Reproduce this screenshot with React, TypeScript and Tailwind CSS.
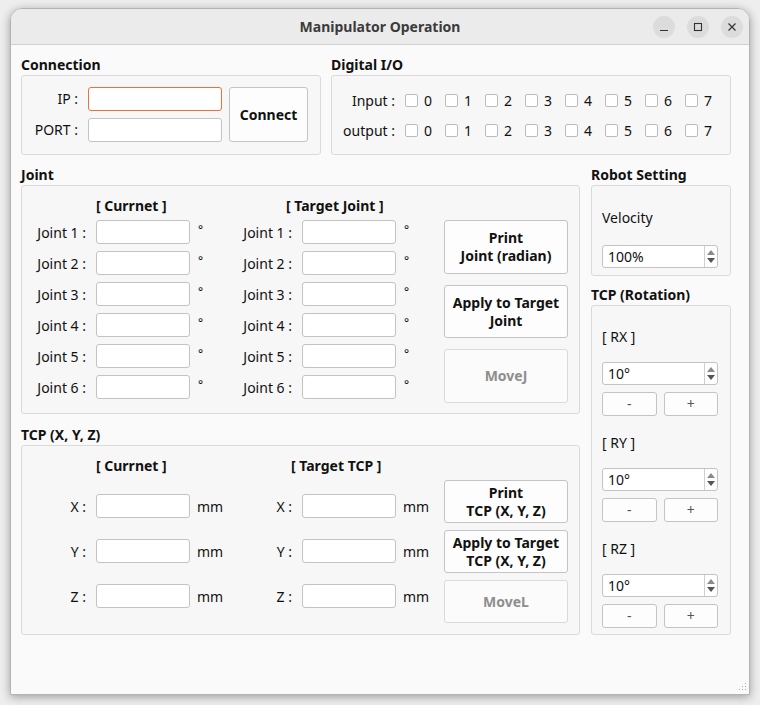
import React from "react";

const font = "font-['Noto_Sans',sans-serif]";

function GroupLabel({ children }: { children: React.ReactNode }) {
  return (
    <div className="h-[20px] whitespace-nowrap text-[14px] font-bold leading-[20px] text-[#111]">
      {children}
    </div>
  );
}

function Field({ width = "w-[94px]", focused = false }: { width?: string; focused?: boolean }) {
  return (
    <input
      className={`h-[24px] ${width} rounded-[3px] border bg-white outline-none ${
        focused ? "border-[#ec6e43]" : "border-[#c3c3c3]"
      }`}
    />
  );
}

function Btn({
  children,
  className = "",
  disabled = false,
}: {
  children: React.ReactNode;
  className?: string;
  disabled?: boolean;
}) {
  return (
    <button
      type="button"
      className={`flex items-center justify-center rounded-[3px] border text-center text-[14px] font-bold leading-[18px] ${
        disabled
          ? "border-[#dadada] bg-[#fbfbfb] text-[#8e8e8e]"
          : "border-[#c4c4c4] bg-[#fdfdfd] text-[#111]"
      } ${className}`}
    >
      {children}
    </button>
  );
}

function SpinBox({ value }: { value: string }) {
  return (
    <div className="flex h-[23px] w-[116px] items-stretch rounded-[3px] border border-[#c3c3c3] bg-white">
      <div className="flex flex-1 items-center pl-[5px] text-[14px] text-[#111]">{value}</div>
      <div className="flex w-[13px] flex-col items-center justify-center gap-[3px] border-l border-[#d0d0d0]">
        <svg width="8" height="5" viewBox="0 0 8 5">
          <path d="M0 5 L4 0 L8 5 Z" fill="#8a8a8a" />
        </svg>
        <svg width="8" height="5" viewBox="0 0 8 5">
          <path d="M0 0 L8 0 L4 5 Z" fill="#555" />
        </svg>
      </div>
    </div>
  );
}

function JointColumn({ header, headerPad }: { header: string; headerPad: string }) {
  const rows = [1, 2, 3, 4, 5, 6];
  return (
    <div className="w-[206px] shrink-0">
      <div className={`h-[20px] text-[14px] font-bold leading-[20px] ${headerPad}`}>{header}</div>
      <div className="mt-[4px] flex flex-col gap-[7px]">
        {rows.map((n) => (
          <div key={n} className="flex h-[24px] items-center">
            <span className="w-[53px] whitespace-nowrap text-right">Joint {n} :</span>
            <span className="ml-[10px]">
              <Field />
            </span>
            <span className="ml-[8px] -mt-[4px] text-[12px]">°</span>
          </div>
        ))}
      </div>
    </div>
  );
}

function TcpColumn({ header, headerPad }: { header: string; headerPad: string }) {
  return (
    <div className="w-[206px] shrink-0">
      <div className={`h-[20px] text-[14px] font-bold leading-[20px] ${headerPad}`}>{header}</div>
      <div className="mt-[18px] flex flex-col gap-[21px]">
        {["X", "Y", "Z"].map((a) => (
          <div key={a} className="flex h-[24px] items-center">
            <span className="w-[53px] whitespace-nowrap text-right">{a} :</span>
            <span className="ml-[10px]">
              <Field />
            </span>
            <span className="ml-[7px]">mm</span>
          </div>
        ))}
      </div>
    </div>
  );
}

function RotSection({ name }: { name: string }) {
  return (
    <div>
      <div className="h-[20px] leading-[20px]">[ {name} ]</div>
      <div className="mt-[15px]">
        <SpinBox value="10°" />
      </div>
      <div className="mt-[7px] flex w-[116px] gap-[7px]">
        <Btn className="h-[24px] flex-1 !font-normal text-[#555]">-</Btn>
        <Btn className="h-[24px] flex-1 !font-normal text-[#555]">+</Btn>
      </div>
    </div>
  );
}

export default function App() {
  const digits = [0, 1, 2, 3, 4, 5, 6, 7];
  return (
    <div className={`h-[705px] w-[760px] overflow-hidden bg-[#eeeeee] pt-[8px] ${font}`}>
      <div className="mx-[10px] flex h-[687px] w-[740px] flex-col overflow-hidden rounded-t-[12px] border border-[#b4b4b4] shadow-[0_2px_10px_rgba(0,0,0,0.35)]">
        {/* title bar */}
        <div className="flex h-[36px] shrink-0 items-center border-b border-[#cfcfcf] bg-[#ebebeb]">
          <div className="w-[110px]" />
          <div className="flex-1 text-center text-[14px] font-bold text-[#3b3b3b]">
            Manipulator Operation
          </div>
          <div className="flex w-[110px] justify-end gap-[12px] pr-[6px]">
            <div className="flex h-[22px] w-[22px] items-center justify-center rounded-full bg-[#dcdcdc]">
              <svg width="10" height="10" viewBox="0 0 10 10">
                <path d="M1 8.5 H9" stroke="#333" strokeWidth="1.2" />
              </svg>
            </div>
            <div className="flex h-[22px] w-[22px] items-center justify-center rounded-full bg-[#dcdcdc]">
              <svg width="10" height="10" viewBox="0 0 10 10">
                <rect x="1.5" y="1.5" width="7" height="7" fill="none" stroke="#333" strokeWidth="1.1" />
              </svg>
            </div>
            <div className="flex h-[22px] w-[22px] items-center justify-center rounded-full bg-[#dcdcdc]">
              <svg width="10" height="10" viewBox="0 0 10 10">
                <path d="M1.5 1.5 L8.5 8.5 M8.5 1.5 L1.5 8.5" stroke="#333" strokeWidth="1.2" />
              </svg>
            </div>
          </div>
        </div>

        {/* content */}
        <div className="relative flex-1 bg-[#fafafa] pl-[10px] pr-[18px] pt-[10px] text-[14px] text-[#111]">
          {/* top row */}
          <div className="flex gap-[10px]">
            <div className="w-[300px] shrink-0">
              <GroupLabel>Connection</GroupLabel>
              <div className="flex h-[80px] rounded-[3px] border border-[#dadada] bg-[#f7f7f7] pt-[11px]">
                <div className="flex w-[56px] flex-col gap-[7px]">
                  <div className="h-[24px] text-right leading-[24px]">IP :</div>
                  <div className="h-[24px] whitespace-nowrap text-right leading-[24px]">PORT :</div>
                </div>
                <div className="ml-[10px] flex flex-col gap-[7px]">
                  <Field width="w-[134px]" focused />
                  <Field width="w-[134px]" />
                </div>
                <Btn className="ml-[7px] h-[55px] w-[79px]">Connect</Btn>
              </div>
            </div>
            <div className="flex-1">
              <GroupLabel>Digital I/O</GroupLabel>
              <div className="h-[80px] rounded-[3px] border border-[#dadada] bg-[#f7f7f7] pt-[9px]">
                {["Input :", "output :"].map((lbl) => (
                  <div key={lbl} className="flex h-[30px] items-center">
                    <span className="w-[63px] whitespace-nowrap text-right">{lbl}</span>
                    <div className="ml-[10px] flex">
                      {digits.map((d) => (
                        <div key={d} className="flex w-[40px] items-center">
                          <span className="h-[13px] w-[13px] rounded-[2px] border border-[#bcbcbc] bg-white" />
                          <span className="ml-[6px]">{d}</span>
                        </div>
                      ))}
                    </div>
                  </div>
                ))}
              </div>
            </div>
          </div>

          {/* middle + bottom */}
          <div className="mt-[10px] flex gap-[11px]">
            <div className="w-[559px] shrink-0">
              <GroupLabel>Joint</GroupLabel>
              <div className="flex h-[229px] rounded-[3px] border border-[#dadada] bg-[#f7f7f7] pl-[11px] pt-[10px]">
                <JointColumn header="[ Currnet ]" headerPad="pl-[63px]" />
                <div className="w-[205px] shrink-0">
                  <JointColumn header="[ Target Joint ]" headerPad="pl-[47px]" />
                </div>
                <div className="flex flex-col gap-[11px] pt-[24px]">
                  <Btn className="h-[54px] w-[124px]">
                    Print
                    <br />
                    Joint (radian)
                  </Btn>
                  <Btn className="h-[53px] w-[124px]">
                    Apply to Target
                    <br />
                    Joint
                  </Btn>
                  <Btn className="h-[54px] w-[124px]" disabled>
                    MoveJ
                  </Btn>
                </div>
              </div>

              <div className="mt-[11px]">
                <GroupLabel>TCP (X, Y, Z)</GroupLabel>
                <div className="flex h-[190px] rounded-[3px] border border-[#dadada] bg-[#f7f7f7] pl-[11px] pt-[10px]">
                  <TcpColumn header="[ Currnet ]" headerPad="pl-[63px]" />
                  <div className="w-[205px] shrink-0">
                    <TcpColumn header="[ Target TCP ]" headerPad="pl-[52px]" />
                  </div>
                  <div className="flex flex-col gap-[7px] pt-[24px]">
                    <Btn className="h-[43px] w-[124px]">
                      Print
                      <br />
                      TCP (X, Y, Z)
                    </Btn>
                    <Btn className="h-[43px] w-[124px]">
                      Apply to Target
                      <br />
                      TCP (X, Y, Z)
                    </Btn>
                    <Btn className="h-[43px] w-[124px]" disabled>
                      MoveL
                    </Btn>
                  </div>
                </div>
              </div>
            </div>

            <div className="flex-1">
              <GroupLabel>Robot Setting</GroupLabel>
              <div className="h-[91px] rounded-[3px] border border-[#dadada] bg-[#f7f7f7] pl-[10px] pt-[22px]">
                <div className="h-[20px] leading-[20px]">Velocity</div>
                <div className="mt-[17px]">
                  <SpinBox value="100%" />
                </div>
              </div>
              <div className="mt-[9px]">
                <GroupLabel>TCP (Rotation)</GroupLabel>
                <div className="flex h-[330px] flex-col gap-[17px] rounded-[3px] border border-[#dadada] bg-[#f7f7f7] pl-[10px] pt-[21px]">
                  <RotSection name="RX" />
                  <RotSection name="RY" />
                  <RotSection name="RZ" />
                </div>
              </div>
            </div>
          </div>

          {/* resize grip */}
          <svg className="absolute bottom-[2px] right-[2px]" width="10" height="10" viewBox="0 0 10 10">
            {[
              [8, 1],
              [8, 4],
              [5, 4],
              [8, 7],
              [5, 7],
              [2, 7],
            ].map(([x, y], i) => (
              <rect key={i} x={x} y={y} width="1" height="1" fill="#a8a8a8" />
            ))}
          </svg>
        </div>
      </div>
    </div>
  );
}
